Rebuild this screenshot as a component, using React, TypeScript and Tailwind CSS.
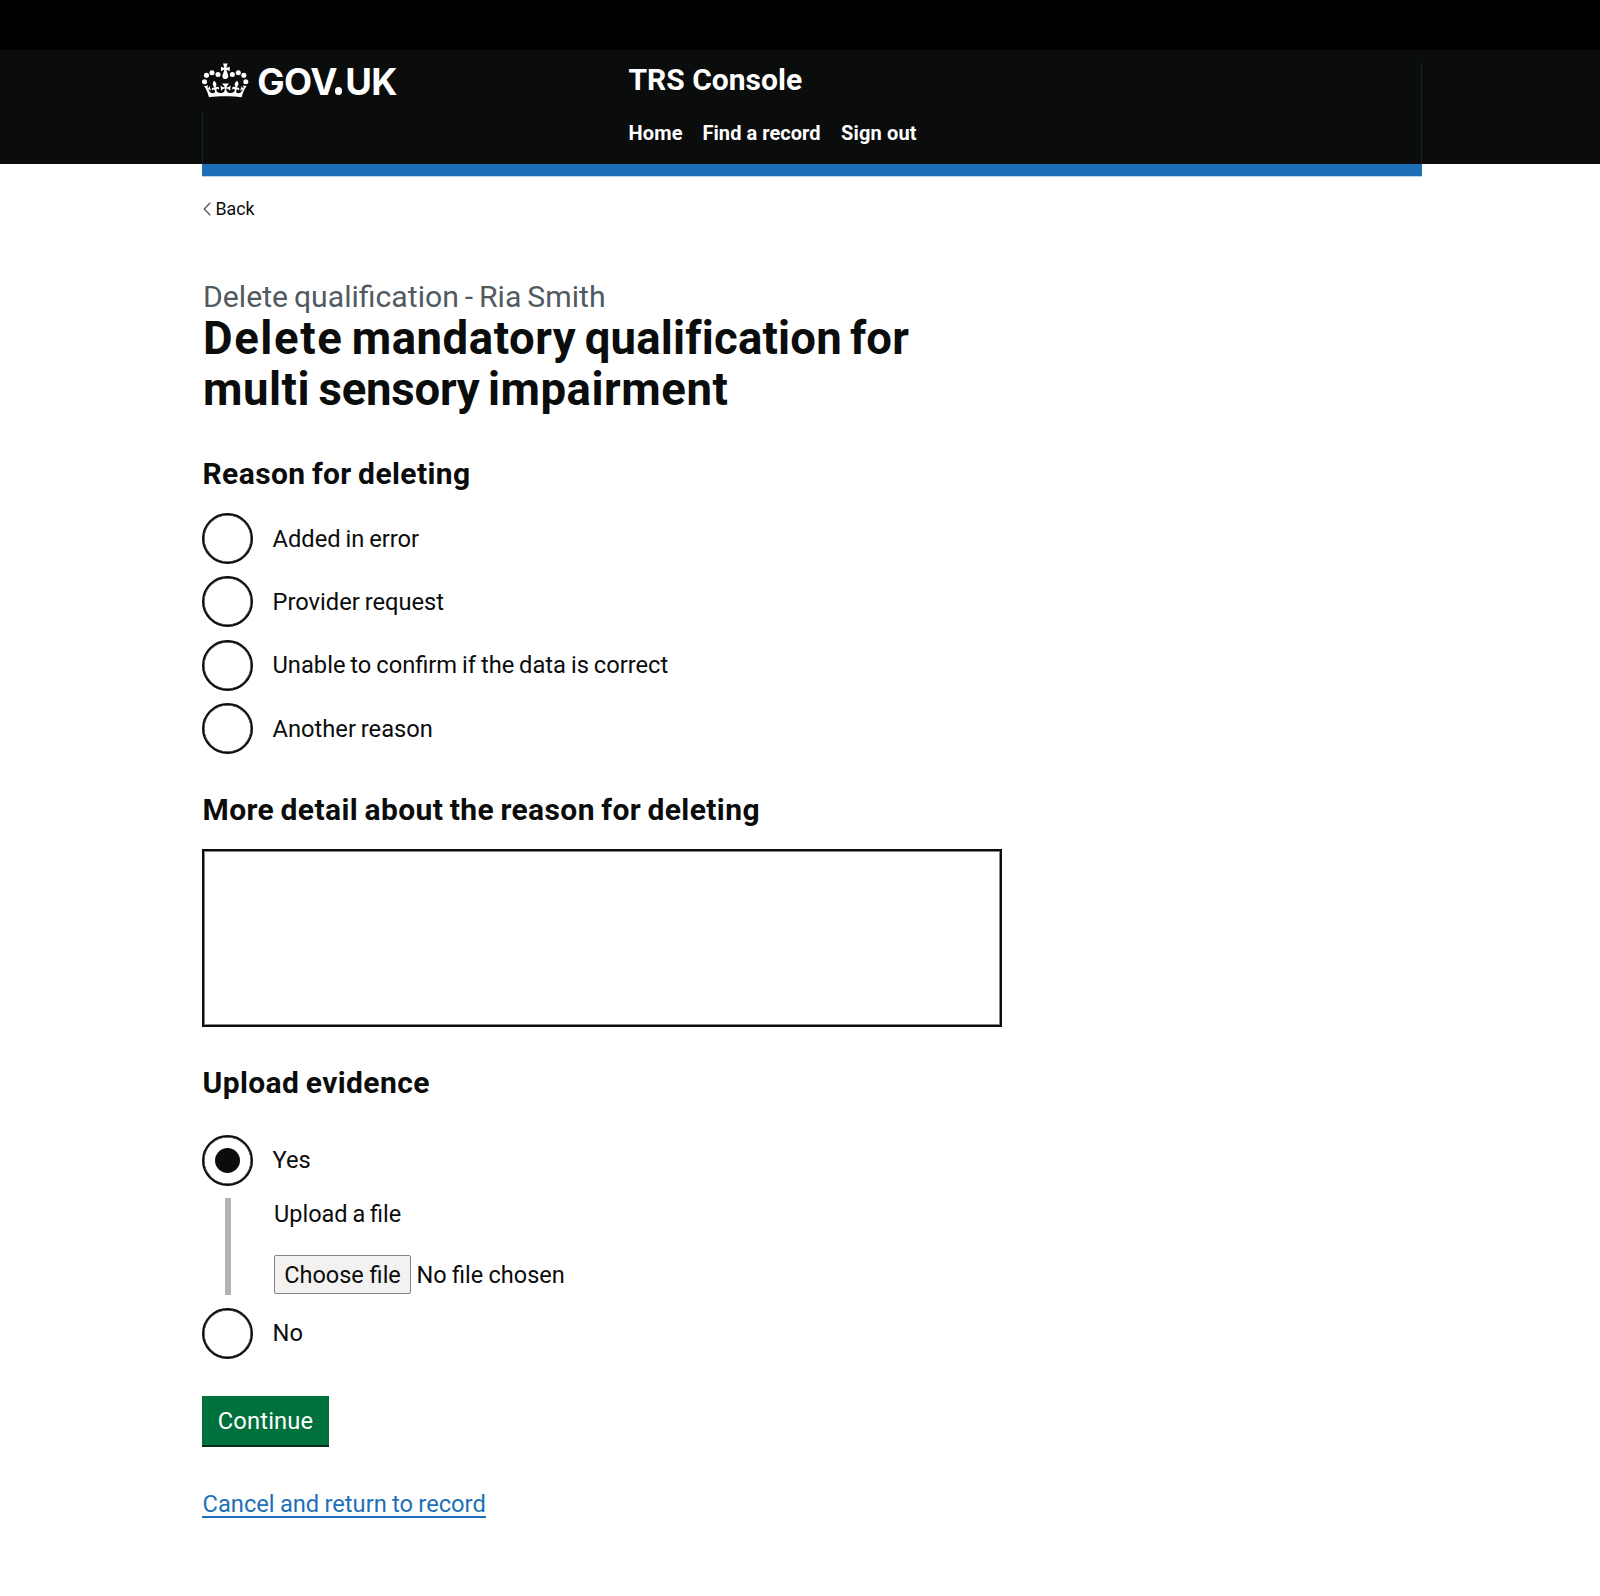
function Crown() {
  return (
    <svg viewBox="18 18 140 105" className="h-[35px] w-[46.67px] shrink-0" fill="#fff" aria-hidden="true">
      <circle cx="25.5" cy="74" r="7.6" />
      <circle cx="31.5" cy="55" r="7.6" />
      <circle cx="48" cy="47" r="7.6" />
      <circle cx="66" cy="52.5" r="7.6" />
      <circle cx="109" cy="52.5" r="7.6" />
      <circle cx="127" cy="47" r="7.6" />
      <circle cx="143.5" cy="55" r="7.6" />
      <circle cx="149.5" cy="74" r="7.6" />
      <path
        transform="translate(24.3 19.5) scale(3.98 4)"
        d="M17 4.7l2.3 1.2V2.5l-2.3.7-.2-.2.9-3h-3.4l.9 3-.2.2c-.1.1-2.3-.7-2.3-.7v3.4L15 4.7c.1.1.1.2.2.2l-1.3 4c-.1.2-.1.4-.1.6 0 1.1.8 2 1.9 2.2h.7c1-.2 1.9-1.1 1.9-2.1 0-.2 0-.4-.1-.6l-1.3-4c-.1-.2 0-.2.1-.3"
      />
      <path
        transform="translate(24.3 8.5) scale(3.98 3.75)"
        d="M16 29.2c4.4 0 8.6.3 12.3.8 1.1-4.5 2.4-7 3.7-8.8l-2.5-.9c.2 1.3.3 1.9 0 2.7-.4-.4-.8-1.1-1.1-2.3l-1.2 4c.7-.5 1.3-.8 2-.9-1.1 2.5-2.6 3.1-3.5 3-1.1-.2-1.7-1.2-1.5-2.1.3-1.2 1.5-1.5 2.1-.1 1.1-2.3-.8-3-2-2.3 1.9-1.9 2.1-3.5.6-5.6-2.1 1.6-2.1 3.2-1.2 5.5-1.2-1.4-3.2-.6-2.5 1.6.9-1.4 2.1-.5 1.9.8-.2 1.1-1.7 2.1-3.5 1.9-2.7-.2-2.9-2.1-2.9-3.6.7-.1 1.9.5 2.9 1.9l.4-4.3c-1.1 1.1-2.1 1.4-3.2 1.4.4-1.2 2.1-3 2.1-3h-5.4s1.7 1.9 2.1 3c-1.1 0-2.1-.2-3.2-1.4l.4 4.3c1-1.4 2.2-2 2.9-1.9-.1 1.5-.2 3.4-2.9 3.6-1.9.2-3.4-.8-3.5-1.9-.2-1.3 1-2.2 1.9-.8.7-2.3-1.2-3-2.5-1.6.9-2.2.9-3.9-1.2-5.5-1.5 2-1.3 3.7.6 5.6-1.2-.7-3.1 0-2 2.3.6-1.4 1.8-1.1 2.1.1.2.9-.3 1.9-1.5 2.1-.9.2-2.4-.5-3.5-3 .6 0 1.2.3 2 .9l-1.2-4c-.3 1.1-.7 1.9-1.1 2.3-.3-.8-.2-1.4 0-2.7l-2.9.9C1.3 23 2.6 25.5 3.7 30c3.7-.5 7.9-.8 12.3-.8"
      />
    </svg>
  );
}

function Radio({ label, checked = false }: { label: string; checked?: boolean }) {
  return (
    <label className="flex h-[51px] items-center">
      <span className="flex size-[51px] shrink-0 items-center justify-center rounded-full border-[2.5px] border-[#0b0c0c] bg-white shadow-[inset_0_0_0_0.5px_#0b0c0c]">
        {checked && <span className="size-[25px] rounded-full bg-[#0b0c0c]" />}
      </span>
      <span className="ml-[19.5px] whitespace-nowrap [word-spacing:-1px]">{label}</span>
    </label>
  );
}

function SectionTitle({ children }: { children: string }) {
  return (
    <h2 className="h-[38px] pl-[0.5px] text-[30px] leading-[38px] font-bold tracking-[0.4px] whitespace-nowrap [word-spacing:-1.5px]">
      {children}
    </h2>
  );
}

export default function App() {
  return (
    <div className="h-[1596px] w-[1600px] overflow-hidden bg-white font-[Roboto,sans-serif] text-[23.7px] leading-[30px] text-[#0b0c0c]">
      <div className="h-[50px] bg-black" />
      <header className="h-[114px] bg-[#0b0c0c] text-white">
        <div className="relative ml-[202px] flex h-[114px] w-[1220px]">
          <span className="absolute top-[62px] left-0 h-[52px] w-px bg-[#0f2236]" />
          <span className="absolute top-3 right-0 h-[102px] w-px bg-[#13242f]" />
          <div className="flex h-[60px] w-[426.5px] items-start pt-[12.5px]">
            <Crown />
            <span className="mt-[-1px] ml-[8.5px] font-[Inter,sans-serif] text-[36.5px] leading-[40px] font-bold tracking-[-0.5px]">
              GOV
              <span className="relative text-transparent">
                .<span className="absolute bottom-[9px] left-[1.5px] size-[7.5px] rounded-full bg-white" />
              </span>
              UK
            </span>
          </div>
          <div className="flex flex-col pt-[11px]">
            <span className="h-[38px] text-[30px] leading-[38px] font-bold whitespace-nowrap">TRS Console</span>
            <nav className="mt-[19px] flex h-[30px] text-[20px] font-bold whitespace-nowrap">
              <a className="w-[74px] tracking-[0.2px]">Home</a>
              <a className="w-[138.5px] tracking-[0.05px]">Find a record</a>
              <a className="tracking-[0.15px]">Sign out</a>
            </nav>
          </div>
        </div>
      </header>
      <div className="ml-[202px] h-3 w-[1220px] bg-[#1d70b8]" />
      <div className="ml-[202px] h-px w-[1220px] bg-[#bbd4ea]" />

      <main className="ml-[202px] w-[800px]">
        <a className="mt-[19.5px] flex h-6 items-center text-[17.8px] leading-6">
          <svg viewBox="0 0 8 14" className="mr-[5px] ml-[0.5px] h-[14px] w-[8px]" fill="none" stroke="#505a5f" strokeWidth="1.3">
            <path d="M7.3 .8 1.2 7l6.1 6.2" />
          </svg>
          Back
        </a>

        <p className="mt-[60.5px] h-[32px] pl-px text-[30.2px] leading-8 whitespace-nowrap text-[#505a5f] [word-spacing:-1.6px]">
          Delete qualification - Ria Smith
        </p>
        <h1 className="pl-px text-[45.5px] leading-[51px] font-bold tracking-[0.55px] whitespace-nowrap [word-spacing:-3.5px]">
          <span className="tracking-[1.6px]">Delete</span> mandatory{" "}
          <span className="tracking-[0.2px]">qualification for</span>
          <br />
          multi <span className="tracking-[-0.2px]">sensory</span> impairment
        </h1>

        <section className="mt-[40px]">
          <SectionTitle>Reason for deleting</SectionTitle>
          <div className="mt-[20px] flex flex-col gap-[12.4px]">
            <Radio label="Added in error" />
            <Radio label="Provider request" />
            <Radio label="Unable to confirm if the data is correct" />
            <Radio label="Another reason" />
          </div>
        </section>

        <section className="mt-[36.8px]">
          <SectionTitle>More detail about the reason for deleting</SectionTitle>
          <textarea className="mt-[20px] block h-[178px] w-[800px] resize-none border-2 border-[#0b0c0c] shadow-[inset_0_0_0_1px_#0b0c0c80]" />
        </section>

        <section className="mt-[37px]">
          <SectionTitle>Upload evidence</SectionTitle>
          <div className="mt-[33px]">
            <Radio label="Yes" checked />
            <div className="mt-3 ml-[23px] h-[97px] border-l-[6px] border-[#b1b4b6] pl-[43px]">
              <div className="h-[57px] pt-px text-[23.5px] [word-spacing:-1px]">Upload a file</div>
              <div className="flex h-[40px] items-center text-[23.5px] whitespace-nowrap">
                <button className="h-[39px] w-[137px] rounded-[2px] border border-[#858585] bg-[#f3f2f1] pt-px">Choose file</button>
                <span className="ml-[5.5px] pt-px [word-spacing:-0.5px]">No file chosen</span>
              </div>
            </div>
            <div className="mt-[13px]">
              <Radio label="No" />
            </div>
          </div>
        </section>

        <button className="mt-[37px] block h-[51px] w-[127px] border-b-[2.5px] border-[#002d18] bg-[#00703c] pt-px tracking-[0.15px] text-white">
          Continue
        </button>
        <a className="mt-[42px] block h-[29px] w-[284px] border-b-2 border-[#1d70b8] pl-[0.5px] whitespace-nowrap text-[#1d70b8] [word-spacing:-0.6px]">
          Cancel and return to record
        </a>
      </main>
    </div>
  );
}
